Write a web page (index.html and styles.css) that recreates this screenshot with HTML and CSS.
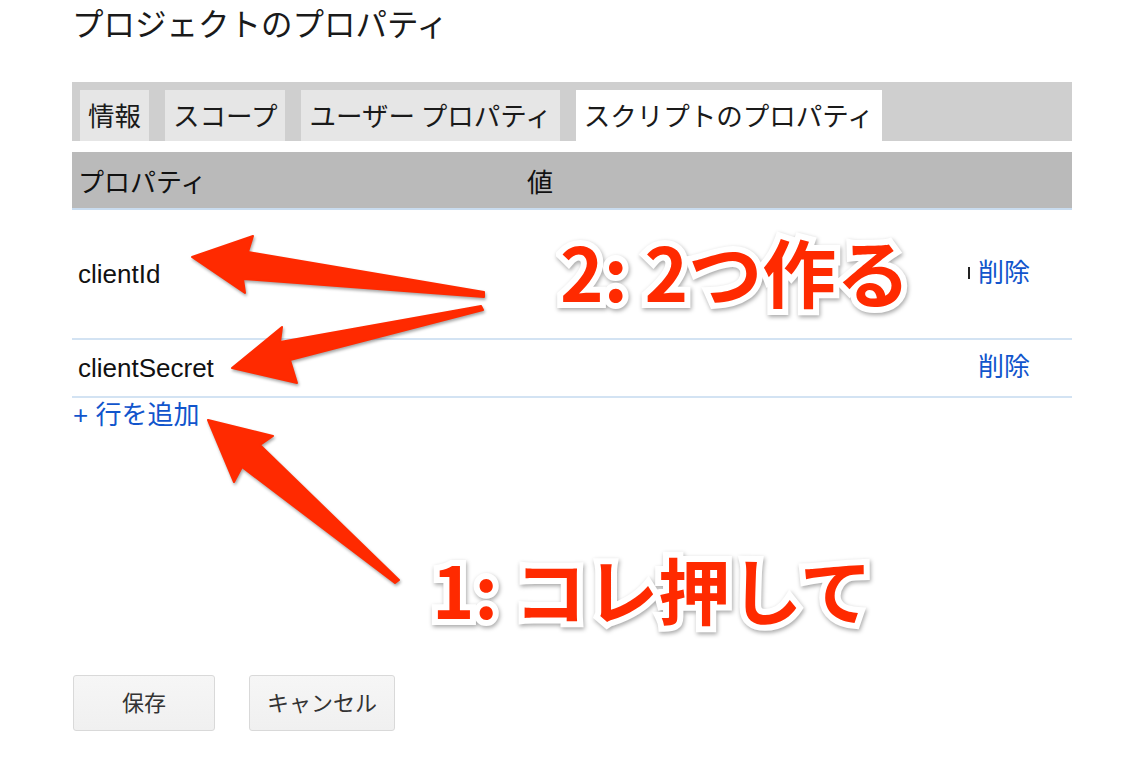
FILE: index.html
```html
<!DOCTYPE html>
<html lang="ja">
<head>
  <meta charset="UTF-8" />
  <title>プロジェクトのプロパティ</title>
  <link rel="stylesheet" href="styles.css">
</head>
<body>
  <div class="page">
    <h1 class="titulo">プロジェクトのプロパティ</h1>

    <div class="abas">
      <div class="aba">情報</div>
      <div class="aba">スコープ</div>
      <div class="aba">ユーザー プロパティ</div>
      <div class="aba ativa">スクリプトのプロパティ</div>
    </div>

    <div class="tabela">
      <div class="linha cabecalho">
        <div class="col-nome">プロパティ</div>
        <div class="col-valor">値</div>
        <div class="col-acao"></div>
      </div>
      <div class="linha alta">
        <div class="col-nome">clientId</div>
        <div class="col-valor"><span class="resto"></span></div>
        <div class="col-acao"><a href="#" class="link">削除</a></div>
      </div>
      <div class="linha">
        <div class="col-nome">clientSecret</div>
        <div class="col-valor"></div>
        <div class="col-acao"><a href="#" class="link">削除</a></div>
      </div>
    </div>

    <a href="#" class="link adicionar">+ 行を追加</a>

    <div class="botoes">
      <button class="botao salvar">保存</button>
      <button class="botao">キャンセル</button>
    </div>
  </div>

  <!-- anotações por cima da tela -->
  <svg class="setas" width="1144" height="768" viewBox="0 0 1144 768">
    <g class="seta">
      <polygon points="192,257 253,236 248,252 484,292 484,297 243,279 245,293" />
      <polygon points="232,368 282,327 280,342 481,306 483,310 290,360 297,383" />
      <polygon points="208,420 273,436 260,445 399,580 395,583 242,467 234,482" />
    </g>
  </svg>
  <div class="nota nota-dois">2: 2つ作る</div>
  <div class="nota nota-um">1: コレ押して</div>
</body>
</html>
```

FILE: styles.css
```css
* {
  box-sizing: border-box;
}

html, body {
  margin: 0;
  padding: 0;
  background: #fff;
  color: #111;
  font-family: "Liberation Sans", "Noto Sans CJK JP", sans-serif;
}

body {
  position: relative;
  width: 1144px;
  height: 768px;
  overflow: hidden;
}

.page {
  padding: 0 72px;
}

.titulo {
  margin: 0;
  padding-top: 4px;
  height: 82px;
  font-family: "Noto Sans CJK JP", sans-serif;
  font-size: 31.5px;
  font-weight: normal;
  line-height: 36px;
  color: #1a1a1a;
}

.abas {
  display: flex;
  gap: 16px;
  height: 59px;
  padding: 8px 8px 0;
  background: #cfcfcf;
}

.aba {
  padding: 0 8px;
  background: #e6e6e6;
  font-family: "Noto Sans CJK JP", sans-serif;
  font-size: 26.5px;
  line-height: 50px;
  color: #1a1a1a;
}

.aba.ativa {
  background: #fff;
}

.tabela {
  margin-top: 11px;
}

.linha {
  display: flex;
  align-items: center;
  height: 58px;
  border-bottom: 2px solid #d3e3f3;
  font-size: 26px;
}

.linha.alta {
  height: 130px;
}

.cabecalho {
  background: #bababa;
  border-bottom-color: #c9dcef;
  font-family: "Noto Sans CJK JP", sans-serif;
  color: #111;
}

.col-nome {
  width: 450px;
  padding-left: 5px;
}

.linha .col-nome {
  padding-left: 6px;
}

.col-valor {
  flex: 1;
  display: flex;
  padding: 0 8px 0 5px;
}

.alta .col-valor {
  justify-content: flex-end;
}

.col-acao {
  width: 94px;
}

.col-acao .link {
  display: block;
  margin-bottom: 7px;
}

.resto {
  display: block;
  width: 2px;
  height: 12px;
  margin-bottom: 2px;
  background: #222;
}

.link {
  color: #1155cc;
  text-decoration: none;
  font-size: 26px;
}

.adicionar {
  display: inline-block;
  padding-left: 1px;
  line-height: 34px;
}

.botoes {
  display: flex;
  gap: 34px;
  margin-top: 243px;
  padding-left: 1px;
}

.botao {
  height: 56px;
  padding: 0 17px 4px;
  border: 1px solid #d9d9d9;
  border-radius: 3px;
  background: linear-gradient(#f6f6f6, #f0f0f0);
  font-family: "Noto Sans CJK JP", sans-serif;
  font-size: 22px;
  color: #333;
}

.botao.salvar {
  width: 142px;
}

.setas {
  position: absolute;
  top: 0;
  left: 0;
  pointer-events: none;
}

.seta polygon {
  fill: #ff2a00;
  stroke: #ff2a00;
  stroke-width: 2;
  stroke-linejoin: round;
  filter: drop-shadow(1px 2px 1.5px rgba(0, 0, 0, 0.35));
}

.nota {
  position: absolute;
  font-family: "Noto Sans CJK JP", sans-serif;
  font-weight: 700;
  font-size: 72px;
  line-height: 72px;
  color: #ff2a00;
  white-space: nowrap;
  -webkit-text-stroke: 12px #fff;
  paint-order: stroke fill;
  filter: drop-shadow(1px 2px 2px rgba(0, 0, 0, 0.35));
}

.nota-dois {
  left: 560px;
  top: 233px;
  font-size: 74px;
  line-height: 74px;
}

.nota-um {
  left: 432px;
  top: 552px;
}
```
